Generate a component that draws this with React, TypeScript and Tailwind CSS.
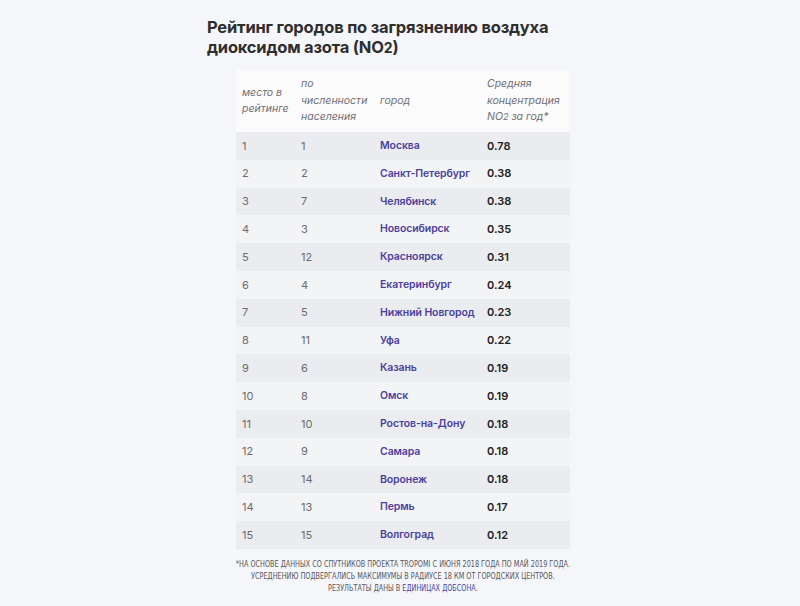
const rows = [
  { place: 1, pop: 1, city: "Москва", value: "0.78" },
  { place: 2, pop: 2, city: "Санкт-Петербург", value: "0.38" },
  { place: 3, pop: 7, city: "Челябинск", value: "0.38" },
  { place: 4, pop: 3, city: "Новосибирск", value: "0.35" },
  { place: 5, pop: 12, city: "Красноярск", value: "0.31" },
  { place: 6, pop: 4, city: "Екатеринбург", value: "0.24" },
  { place: 7, pop: 5, city: "Нижний Новгород", value: "0.23" },
  { place: 8, pop: 11, city: "Уфа", value: "0.22" },
  { place: 9, pop: 6, city: "Казань", value: "0.19" },
  { place: 10, pop: 8, city: "Омск", value: "0.19" },
  { place: 11, pop: 10, city: "Ростов-на-Дону", value: "0.18" },
  { place: 12, pop: 9, city: "Самара", value: "0.18" },
  { place: 13, pop: 14, city: "Воронеж", value: "0.18" },
  { place: 14, pop: 13, city: "Пермь", value: "0.17" },
  { place: 15, pop: 15, city: "Волгоград", value: "0.12" },
];

const App = () => {
  return (
    <div className="min-h-[606px] w-full bg-[#f5f6f9] font-['Inter',sans-serif] text-[#2b2b2b]">
      <div className="mx-auto w-[386px] pt-[17px]">
        <h1 className="text-[16.5px] font-bold leading-[20px] tracking-[-0.2px] text-[#2e2e2e]">
          Рейтинг городов по загрязнению воздуха
          <br />
          диоксидом азота (NO<span className="text-[14px]">2</span>)
        </h1>

        <table className="ml-[29px] mt-[12px] w-[334px] table-fixed border-collapse text-[11px]">
          <colgroup>
            <col className="w-[59px]" />
            <col className="w-[79px]" />
            <col className="w-[107px]" />
            <col className="w-[89px]" />
          </colgroup>
          <thead>
            <tr className="bg-[#fbfbfc] text-left align-middle text-[10.5px] font-normal italic leading-[16.5px] text-[#6f6f76]">
              <th className="h-[62px] px-[6px] font-normal">место в рейтинге</th>
              <th className="px-[6px] font-normal">по численности населения</th>
              <th className="px-[6px] font-normal">город</th>
              <th className="px-[6px] font-normal">
                Средняя концентрация NO<span className="text-[9px]">2</span> за год*
              </th>
            </tr>
          </thead>
          <tbody>
            {rows.map((r, i) => (
              <tr
                key={r.place}
                className={i % 2 === 0 ? "h-[27.8px] bg-[#eaecef]" : "h-[27.8px] bg-[#f3f4f6]"}
              >
                <td className="px-[6px] text-[#6b6b70]">{r.place}</td>
                <td className="px-[6px] text-[#6b6b70]">{r.pop}</td>
                <td className="whitespace-nowrap px-[6px] text-[10.5px] font-semibold tracking-[-0.1px] text-[#4b3f9e]">
                  {r.city}
                </td>
                <td className="px-[6px] font-semibold text-[#222]">{r.value}</td>
              </tr>
            ))}
          </tbody>
        </table>

        <div className="ml-[29px] mt-[9px] flex w-[334px] justify-center">
          <p className="scale-x-[0.76] whitespace-nowrap text-center font-['Liberation_Sans_Narrow','DejaVu_Sans_Condensed',sans-serif] text-[9.5px] uppercase leading-[12px] text-[#55555c]">
            *на основе данных со спутников проекта TROPOMI с июня 2018 года по май 2019 года.
            <br />
            Усреднению подвергались максимумы в радиусе 18 км от городских центров.
            <br />
            Результаты даны в <span className="text-[#4b3f9e]">единицах Добсона</span>.
          </p>
        </div>
      </div>
    </div>
  );
};

export default App;
